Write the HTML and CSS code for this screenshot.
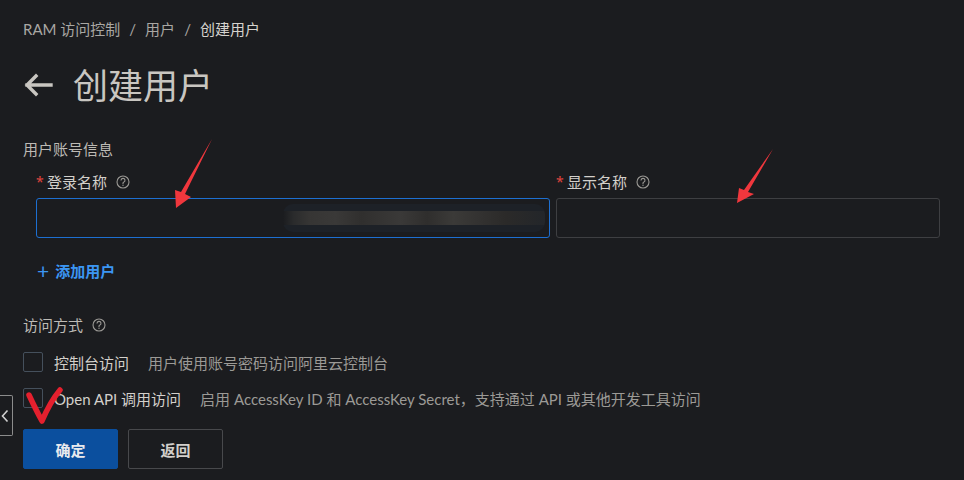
FILE: index.html
```html
<!DOCTYPE html>
<html lang="zh-CN">
<head>
<meta charset="utf-8">
<title>创建用户</title>
<link rel="stylesheet" href="styles.css">
</head>
<body>
<div class="page">
  <nav class="crumbs">
    <span>RAM 访问控制</span><span class="sep">/</span><span>用户</span><span class="sep">/</span><span class="cur">创建用户</span>
  </nav>
  <div class="title-row">
    <svg class="back" width="30" height="24" viewBox="0 0 30 24"><path d="M28 12H4M13 3L4 12L13 21" fill="none" stroke="#c9c6c1" stroke-width="3.4" stroke-linecap="square"/></svg>
    <h1>创建用户</h1>
  </div>
  <div class="section-label">用户账号信息</div>
  <div class="fields">
    <div class="field f1">
      <div class="label"><span class="req">*</span>登录名称<svg class="q" width="14" height="14" viewBox="0 0 14 14"><circle cx="7" cy="7" r="6" fill="none" stroke="#9a9894" stroke-width="1.1"/><path d="M5 5.4a2 2 0 1 1 2.6 1.9c-.5.2-.6.5-.6 1v.6" fill="none" stroke="#9a9894" stroke-width="1.1"/><circle cx="7" cy="10.3" r=".7" fill="#9a9894"/></svg></div>
      <div class="input active"><div class="blur"></div></div>
    </div>
    <div class="field f2">
      <div class="label"><span class="req">*</span>显示名称<svg class="q" width="14" height="14" viewBox="0 0 14 14"><circle cx="7" cy="7" r="6" fill="none" stroke="#9a9894" stroke-width="1.1"/><path d="M5 5.4a2 2 0 1 1 2.6 1.9c-.5.2-.6.5-.6 1v.6" fill="none" stroke="#9a9894" stroke-width="1.1"/><circle cx="7" cy="10.3" r=".7" fill="#9a9894"/></svg></div>
      <div class="input"></div>
    </div>
  </div>
  <div class="add"><span class="plus">+</span>添加用户</div>
  <div class="section-label access">访问方式<svg class="q" width="14" height="14" viewBox="0 0 14 14"><circle cx="7" cy="7" r="6" fill="none" stroke="#9a9894" stroke-width="1.1"/><path d="M5 5.4a2 2 0 1 1 2.6 1.9c-.5.2-.6.5-.6 1v.6" fill="none" stroke="#9a9894" stroke-width="1.1"/><circle cx="7" cy="10.3" r=".7" fill="#9a9894"/></svg></div>
  <div class="check-row r1">
    <span class="box"></span><span class="opt">控制台访问</span><span class="desc">用户使用账号密码访问阿里云控制台</span>
  </div>
  <div class="check-row r2">
    <span class="box"></span><span class="opt">Open API 调用访问</span><span class="desc">启用 AccessKey ID 和 AccessKey Secret，支持通过 API 或其他开发工具访问</span>
  </div>
  <div class="actions">
    <button class="btn primary">确定</button>
    <button class="btn">返回</button>
  </div>
</div>

<div class="side-tab"><svg width="8" height="14" viewBox="0 0 8 14"><path d="M6.5 1.5L1.5 7L6.5 12.5" fill="none" stroke="#d0d0d0" stroke-width="1.6"/></svg></div>

<svg class="marks" width="964" height="480" viewBox="0 0 964 480">
  <polygon points="212,139 185,194 191,197 176,208 175,190 181,192" fill="#f0373d"/>
  <polygon points="773,149 748,192 754,194 737,203 739,188 744,190" fill="#f0373d"/>
  <path d="M29 395 Q36 410 42 421 Q50 402 60 390" fill="none" stroke="#e5202e" stroke-width="5.5" stroke-linecap="round" stroke-linejoin="round"/>
</svg>
</body>
</html>
```
FILE: styles.css
```css
* { box-sizing: border-box; }
html, body { margin: 0; padding: 0; }
body {
  background: #1b1c1f;
  width: 964px;
  height: 480px;
  overflow: hidden;
  position: relative;
  font-family: "Lato", "Noto Sans CJK SC", sans-serif;
  font-size: 15px;
  color: #cfcdc9;
}
.page { padding: 19px 24px 0 23px; }
.crumbs {
  height: 20px;
  line-height: 20px;
  color: #a9a7a3;
  font-size: 15px;
  display: flex;
}
.crumbs .sep { margin: 0 9px; }
.crumbs .cur { color: #d6d3ce; }
.title-row {
  margin-top: 24px;
  height: 44px;
  display: flex;
  align-items: center;
}
.back { margin-right: 20px; }
h1 {
  margin: 0;
  font-size: 35px;
  font-weight: 400;
  color: #c9c6c1;
  line-height: 44px;
}
.section-label {
  margin-top: 32px;
  height: 20px;
  line-height: 20px;
  color: #bdbab5;
  font-size: 15px;
  display: flex;
  align-items: center;
}
.fields {
  margin-top: 13px;
  padding-left: 13px;
  display: flex;
  gap: 6px;
}
.field.f1 { width: 514px; }
.field.f2 { width: 384px; }
.label {
  height: 20px;
  line-height: 20px;
  display: flex;
  align-items: center;
  color: #d3d0cb;
  font-size: 15px;
}
.req {
  color: #e0443e;
  margin-right: 4px;
  font-family: "Noto Sans", sans-serif;
  font-size: 14px;
  width: 7px;
}
.q { margin-left: 9px; }
.input {
  margin-top: 6px;
  height: 40px;
  border: 1px solid #3e3f42;
  border-radius: 3px;
  display: flex;
  align-items: center;
  justify-content: flex-end;
  padding-right: 4px;
}
.input.active { border-color: #1d6fd1; }
.blur {
  width: 262px;
  height: 28px;
  border-radius: 10px;
  background:
    linear-gradient(90deg, #1b1c1f 0, #2a2b2c 4%, #363534 10%, #3a3938 20%, #302f2e 30%, #3a3938 45%, #2f2e2d 55%, #3b3a38 65%, #333231 75%, #2b2a29 85%, #23262a 100%) center / 100% 14px no-repeat,
    #1d2127;
}
.add {
  margin-top: 23px;
  margin-left: 14px;
  height: 20px;
  line-height: 20px;
  color: #3b96f3;
  font-weight: 700;
  font-size: 15px;
  display: flex;
  align-items: center;
}
.plus { font-size: 21px; font-weight: 400; margin-right: 6px; }
.section-label.access { margin-top: 34px; }
.check-row {
  height: 20px;
  display: flex;
  align-items: center;
  font-size: 15px;
}
.r1 { margin-top: 17px; }
.r2 { margin-top: 16px; }
.box {
  width: 20px;
  height: 20px;
  border: 1px solid #45505c;
  border-radius: 2px;
  margin-right: 11px;
}
.opt { color: #d3d0cb; margin-right: 19px; }
.desc { color: #9c9a96; }
.actions {
  margin-top: 21px;
  display: flex;
  gap: 10px;
}
.btn {
  width: 95px;
  height: 40px;
  border: 1px solid #48494c;
  border-radius: 2px;
  background: transparent;
  color: #d3d0cb;
  font-family: "Lato", "Noto Sans CJK SC", sans-serif;
  font-size: 15px;
  font-weight: 700;
}
.btn.primary {
  background: #0b4f9e;
  border-color: #0b4f9e;
  color: #e8eaee;
}
.side-tab {
  position: absolute;
  left: -2px;
  top: 395px;
  width: 15px;
  height: 41px;
  border: 1px solid #8c8c8c;
  border-left: none;
  border-radius: 0 2px 2px 0;
  display: flex;
  align-items: center;
  justify-content: center;
}
.marks { position: absolute; left: 0; top: 0; pointer-events: none; }
```
